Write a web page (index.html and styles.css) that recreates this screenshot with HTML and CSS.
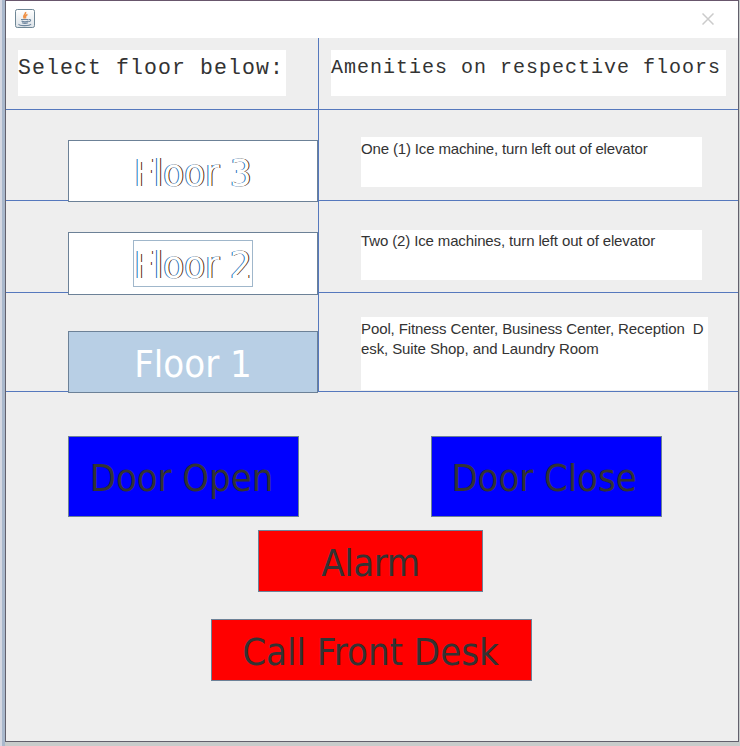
FILE: index.html
```html
<!DOCTYPE html>
<html lang="en">
<head>
<meta charset="utf-8">
<title>Elevator</title>
<link rel="stylesheet" href="styles.css">
</head>
<body>
<main class="window">
  <header class="titlebar">
    <svg class="java" width="20" height="20" viewBox="0 0 20 20" fill="none">
      <defs><linearGradient id="g" x2="0" y2="1"><stop stop-color="#fff"/><stop offset="1" stop-color="#dde3e8"/></linearGradient></defs>
      <rect x=".5" y=".5" width="19" height="18" rx="1.8" fill="url(#g)" stroke="#6f8796"/>
      <path d="M10.500 3C11.500 5.500 7 6 9.500 9.500M12.500 5.500C9.500 6.500 10.500 8 10.500 9.500" stroke="#ef9248" stroke-width="1.600"/>
      <path d="M6 10.500h7.500M6.500 12c2 1 5 1 7 0M7 13.800c2 .8 4 .8 6 0M14 10.500c2.500-.5 2 2-.5 2.300M4 15c-1.500 2 11 2.300 12 0" stroke="#6f879f" stroke-width="1.100"/>
    </svg>
    <svg class="close" width="12" height="12" viewBox="0 0 12 12"><path d="M.5.5l11 11M11.500.5l-11 11" stroke="#cbcbcb" stroke-width="1.500"/></svg>
  </header>
  <section class="floors">
    <div class="cell heading"><h1 class="label select"><span>Select floor below:</span></h1></div>
    <div class="cell heading right"><h2 class="label amenities"><span>Amenities on respective floors</span></h2></div>

    <div class="cell pick"><button class="floor"><span>Floor 3</span></button></div>
    <div class="cell right info first"><p class="note"><span>One (1) Ice machine, turn left out of elevator</span></p></div>

    <div class="cell pick second"><button class="floor tall"><span class="focus">Floor 2</span></button></div>
    <div class="cell right info"><p class="note raised"><span>Two (2) Ice machines, turn left out of elevator</span></p></div>

    <div class="cell pick third"><button class="floor pressed"><span>Floor 1</span></button></div>
    <div class="cell right info last"><p class="note large"><span>Pool, Fitness Center, Business Center, Reception&nbsp; D<br>esk, Suite Shop, and Laundry Room</span></p></div>
  </section>
  <section class="controls">
    <div class="doors">
      <button class="door open"><span>Door Open</span></button>
      <button class="door shut"><span>Door Close</span></button>
    </div>
    <button class="alert alarm"><span>Alarm</span></button>
    <button class="alert desk"><span>Call Front Desk</span></button>
  </section>
</main>
</body>
</html>
```
FILE: styles.css
```css
* { box-sizing: border-box; }
body {
  margin: 0;
  height: 746px;
  padding: 0 1px 4px 5px;
  overflow: hidden;
  background: linear-gradient(90deg, #d5d8e2 0 2px, #a9b8cc 2px 5px, #c8cccb 5px);
}
.window {
  width: 734px;
  height: 742px;
  border: 1px solid #62606c;
  border-top-color: #68566c;
  background: #eeeeee;
}
.titlebar {
  display: flex;
  justify-content: space-between;
  align-items: flex-start;
  height: 37px;
  padding: 8px 24px 0 9px;
  background: #fff;
}
.close { margin-top: 4px; }
.floors {
  display: grid;
  grid-template-columns: 313px 1fr;
  grid-template-rows: 72px 91px 92px 99px;
}
.cell { border-bottom: 1px solid #5578bd; border-right: 1px solid #5578bd; min-width: 0; }
.right { border-right: 0; }
.heading { padding: 12px; }
.label {
  margin: 0;
  height: 46px;
  background: #fff;
  color: #333;
  font-family: "Liberation Mono", monospace;
  font-weight: 400;
  white-space: pre;
}
.select { width: 268px; font-size: 21.5px; line-height: 36px; letter-spacing: 1.1px; }
.amenities { width: 395px; font-size: 20px; line-height: 35px; letter-spacing: 1px; }
.pick { padding: 30px 0 0 62px; }
.second { padding-top: 31px; }
.third { padding-top: 38px; }
button {
  display: flex;
  align-items: center;
  justify-content: center;
  margin: 0;
  padding: 4px 0 0;
  border: 1px solid #6c8197;
  color: #333;
  font: 38px/45px "DejaVu Sans Condensed", "DejaVu Sans", sans-serif;
  font-stretch: condensed;
  white-space: nowrap;
}
.floor {
  position: relative;
  width: 250px;
  height: 62px;
  background: #fff;
  color: #fff;
  text-shadow: -1px 0 #1d6fb8, 1px 0 #55290a;
}
.tall { height: 63px; padding-top: 0; }
.floor.pressed { background: #b8cfe5; text-shadow: none; }
.focus { outline: 1px solid #a0b7cb; line-height: 49px; height: 45px; }
.info { padding: 29px 0 0 42px; }
.first { padding-top: 27px; }
.last { padding-top: 24px; }
.note {
  width: 341px;
  height: 50px;
  margin: 0;
  padding-top: 2px;
  background: #fff;
  color: #333;
  font: 15px/20px "Liberation Sans", sans-serif;
  letter-spacing: -.15px;
  white-space: nowrap;
}
.raised { padding-top: 1px; letter-spacing: -.13px; }
.large { width: 347px; height: 73px; letter-spacing: -.1px; }
.controls { display: flex; flex-direction: column; padding: 44px 76px 0 62px; }
.doors { display: flex; justify-content: space-between; }
.door { width: 231px; height: 81px; background: #0000ff; letter-spacing: -.1px; }
.open { padding-right: 4px; }
.shut { padding-right: 5px; }
.alert { background: #ff0000; }
.alarm { width: 225px; height: 62px; margin: 13px 0 0 190px; letter-spacing: -.4px; }
.desk { width: 321px; height: 62px; margin: 27px 0 0 143px; padding-right: 2px; }
```
